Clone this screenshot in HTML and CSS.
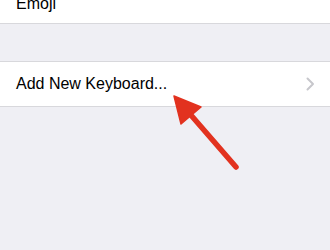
FILE: index.html
```html
<!DOCTYPE html>
<html>
<head>
<meta charset="utf-8">
<link rel="stylesheet" href="styles.css">
</head>
<body>
<div class="screen">
  <div class="group group-top">
    <div class="row row-cut"><span class="label">Emoji</span></div>
  </div>
  <div class="spacer"></div>
  <div class="group">
    <div class="row row-full">
      <span class="label">Add New Keyboard...</span>
      <svg class="chevron" width="9" height="14" viewBox="0 0 9 14"><path d="M1.5 1.5 L7 7 L1.5 12.5" fill="none" stroke="#c7c7cc" stroke-width="2" stroke-linecap="round" stroke-linejoin="round"/></svg>
    </div>
  </div>
  <svg class="arrow" width="330" height="250" viewBox="0 0 330 250">
    <line x1="190" y1="114" x2="236" y2="167" stroke="#e2321f" stroke-width="5.5" stroke-linecap="round"/>
    <polygon points="174,96 201,107 181,124" fill="#e2321f" stroke="#e2321f" stroke-width="1.5" stroke-linejoin="round"/>
  </svg>
</div>
</body>
</html>
```
FILE: styles.css
```css
html, body {
  margin: 0;
  padding: 0;
}
body {
  background: #efeff4;
  font-family: "Liberation Sans", Arial, sans-serif;
  color: #000;
}
.screen {
  position: relative;
  width: 330px;
  height: 250px;
  overflow: hidden;
}
.group {
  background: #fff;
  border-top: 1px solid #d8d8dc;
  border-bottom: 1px solid #d8d8dc;
}
.group-top {
  border-top: none;
}
.row {
  display: flex;
  align-items: center;
  padding: 0 16px;
  box-sizing: border-box;
}
.label {
  font-size: 16px;
  line-height: 20px;
}
.row-cut {
  height: 23px;
  align-items: flex-end;
  padding-bottom: 9px;
}
.spacer {
  height: 37px;
}
.row-full {
  height: 44px;
  justify-content: space-between;
  padding-right: 15px;
}
.chevron {
  display: block;
}
.arrow {
  position: absolute;
  left: 0;
  top: 0;
  pointer-events: none;
}
```
